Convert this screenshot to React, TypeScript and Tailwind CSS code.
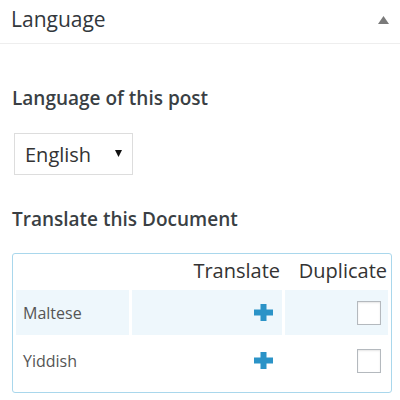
import React from "react";

const rows = [
  { lang: "Maltese", shaded: true },
  { lang: "Yiddish", shaded: false },
];

function Plus() {
  return (
    <svg width="19" height="17" viewBox="0 0 19 17" className="inline-block">
      <rect x="0" y="5.5" width="19" height="6" fill="#2b93c7" />
      <rect x="6.5" y="0" width="6" height="17" fill="#2b93c7" />
    </svg>
  );
}

export default function App() {
  return (
    <div className="h-[400px] w-[400px] overflow-hidden bg-white text-[#32373c]" style={{ fontFamily: '"Open Sans", sans-serif' }}>
      {/* box header */}
      <div className="flex items-start justify-between border-b border-[#eeeeee] pl-[11px] pr-[11px] pt-[5px] pb-[10px]">
        <span className="text-[21px] leading-[28px]">Language</span>
        <svg width="11" height="8" viewBox="0 0 11 8" className="mt-[11px]">
          <polygon points="5.5,0 11,8 0,8" fill="#7a7a7a" />
        </svg>
      </div>

      <div className="px-[12px]">
        <p className="mt-[41px] text-[19px] font-semibold leading-[26px] text-[#3a3f44]">Language of this post</p>

        <div className="mt-[22px] ml-[2px] flex h-[42px] w-[119px] items-start justify-between border border-[#dddddd] pl-[10px] pr-[10px] pt-[7px]">
          <span className="text-[20px] leading-[28px] text-[#333]">English</span>
          <svg width="7" height="7" viewBox="0 0 7 7" className="mt-[9px]">
            <polygon points="0,0 7,0 3.5,7" fill="#111" />
          </svg>
        </div>

        <p className="mt-[31px] text-[19px] font-semibold leading-[26px] text-[#3a3f44]">Translate this Document</p>

        <div className="mt-[21px] w-[380px] rounded-[3px] border border-[#a9d7ec] pb-[6px]">
          <table className="w-[378px] border-separate border-spacing-[3px]">
            <thead>
              <tr>
                <th className="w-[113px]" />
                <th className="h-[30px] w-[150px] pr-[2px] pb-[2px] text-right align-bottom text-[20px] font-normal leading-[28px] text-[#333]">
                  Translate
                </th>
                <th className="h-[30px] w-[103px] pr-[1px] pb-[2px] text-right align-bottom text-[20px] font-normal leading-[28px] text-[#333]">
                  Duplicate
                </th>
              </tr>
            </thead>
            <tbody>
              {rows.map((r) => (
                <tr key={r.lang}>
                  <td className={`h-[45px] pl-[7px] align-middle text-[16px] leading-[22px] text-[#555] ${r.shaded ? "bg-[#eef7fc]" : ""}`}>
                    {r.lang}
                  </td>
                  <td className={`h-[45px] pr-[9px] pb-[4px] text-right align-middle ${r.shaded ? "bg-[#eef7fc]" : ""}`}>
                    <Plus />
                  </td>
                  <td className={`h-[45px] pr-[7px] text-right align-middle ${r.shaded ? "bg-[#eef7fc]" : ""}`}>
                    <span className="inline-block h-[24px] w-[24px] border border-[#b4b9be] bg-white align-middle shadow-[inset_0_1px_2px_rgba(0,0,0,0.1)]" />
                  </td>
                </tr>
              ))}
            </tbody>
          </table>
        </div>
      </div>
    </div>
  );
}
